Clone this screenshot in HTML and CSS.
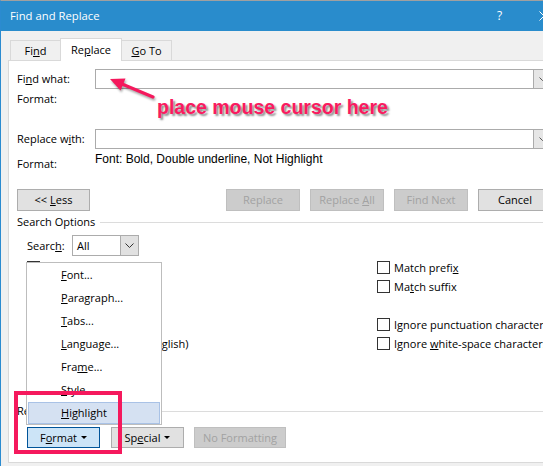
FILE: index.html
```html
<!DOCTYPE html>
<html lang="en">
<head>
<meta charset="utf-8">
<title>Find and Replace</title>
<link rel="stylesheet" href="styles.css">
</head>
<body>
<div class="window">
  <div class="titlebar">
    <span class="title">Find and Replace</span>
    <span class="tb-help">?</span>
    <svg class="tb-close" width="10" height="10" viewBox="0 0 10 10"><path d="M0.5 0.5 L9.5 9.5 M9.5 0.5 L0.5 9.5" stroke="#fff" stroke-width="1" fill="none"/></svg>
  </div>
  <div class="tabs">
    <div class="tab t-find">Fi<u>n</u>d</div>
    <div class="tab t-replace active">Re<u>p</u>lace</div>
    <div class="tab t-goto"><u>G</u>o To</div>
  </div>
  <div class="panel">
    <div class="frow r-find">
      <span class="lbl">Fi<u>n</u>d what:</span>
      <div class="combo"><div class="combo-field"></div><div class="combo-btn"><svg width="7" height="4" viewBox="0 0 7 4"><polyline points="0.5,0.5 3.5,3.5 6.5,0.5" fill="none" stroke="#555" stroke-width="1"/></svg></div></div>
    </div>
    <div class="frow r-fmt"><span class="lbl">Format:</span><span></span></div>
    <div class="frow r-replace">
      <span class="lbl">Replace w<u>i</u>th:</span>
      <div class="combo"><div class="combo-field"></div><div class="combo-btn"><svg width="7" height="4" viewBox="0 0 7 4"><polyline points="0.5,0.5 3.5,3.5 6.5,0.5" fill="none" stroke="#555" stroke-width="1"/></svg></div></div>
    </div>
    <div class="frow r-fmt2"><span class="lbl">Format:</span><span class="fmt-value">Font: Bold, Double underline, Not Highlight</span></div>
    <div class="btnrow">
      <button class="btn b-less"><span>&lt;&lt; <u>L</u>ess</span></button>
      <button class="btn dis b-replace"><span>Replace</span></button>
      <button class="btn dis b-gap"><span>Replace <u>A</u>ll</span></button>
      <button class="btn dis b-gap"><span>Find Next</span></button>
      <button class="btn b-gap"><span>Cancel</span></button>
    </div>
    <div class="group g-search"><span>Search Options</span><i class="rule"></i></div>
    <div class="searchrow">
      <span class="slbl">Searc<u>h</u>:</span>
      <div class="select"><span class="sel-val">All</span><span class="sel-btn"><svg width="9" height="5" viewBox="0 0 9 5"><polyline points="0.5,0.5 4.5,4.5 8.5,0.5" fill="none" stroke="#333" stroke-width="1"/></svg></span></div>
    </div>
    <div class="opts">
      <div class="opt"><span class="cb"></span><span>Matc<u>h</u> case</span></div>
      <div class="opt"><span class="cb"></span><span>Match prefi<u>x</u></span></div>
      <div class="opt"><span class="cb"></span><span>Find wh<u>o</u>le words only</span></div>
      <div class="opt"><span class="cb"></span><span>Ma<u>t</u>ch suffix</span></div>
      <div class="opt"><span class="cb"></span><span>Use wildcards</span></div>
      <div class="opt"></div>
      <div class="opt"><span class="cb"></span><span>Sounds li<u>k</u>e (English)</span></div>
      <div class="opt"><span class="cb"></span><span>Ignore punctuation characters</span></div>
      <div class="opt"><span class="cb"></span><span>Find all word forms (English)</span></div>
      <div class="opt"><span class="cb"></span><span>Ignore <u>w</u>hite-space characters</span></div>
    </div>
    <div class="group g-replace"><span>Replace</span><i class="rule"></i></div>
    <div class="btnrow2">
      <button class="btn focus b-format"><span>F<u>o</u>rmat</span><i class="caret"></i></button>
      <button class="btn b-special"><span>Sp<u>e</u>cial</span><i class="caret"></i></button>
      <button class="btn dis b-nofmt"><span>No Formatting</span></button>
    </div>
  </div>
</div>

<div class="menu">
  <div class="mi"><u>F</u>ont...</div>
  <div class="mi"><u>P</u>aragraph...</div>
  <div class="mi"><u>T</u>abs...</div>
  <div class="mi"><u>L</u>anguage...</div>
  <div class="mi">Fra<u>m</u>e...</div>
  <div class="mi"><u>S</u>tyle</div>
  <div class="mi hl"><u>H</u>ighlight</div>
</div>

<div class="callout">place mouse cursor here</div>
<svg class="arrow" width="70" height="40" viewBox="0 0 70 40">
  <line x1="22" y1="14" x2="53" y2="27" stroke="#f5195d" stroke-width="3.2" stroke-linecap="round"/>
  <polygon points="10,9 25.5,8.5 20.5,20.5" fill="#f5195d"/>
</svg>
<div class="mark"></div>
</body>
</html>
```

FILE: styles.css
```css
* { box-sizing: border-box; }
html, body { margin: 0; padding: 0; }
body {
  width: 543px;
  height: 466px;
  overflow: hidden;
  position: relative;
  background: #f0f0f0;
  color: #000;
  font-family: "Open Sans", "Noto Sans", "DejaVu Sans", sans-serif;
  font-size: 11px;
  line-height: 16px;
}
u { text-decoration: underline; text-decoration-thickness: 1px; text-underline-offset: 1px; }

.window {
  width: 570px;
  height: 466px;
  border-top: 1px solid #a0a0a0;
  border-left: 1px solid #2b8bd0;
}

/* title bar */
.titlebar {
  height: 30px;
  background: #298ccc;
  color: #fff;
  display: flex;
  align-items: center;
  padding-left: 9px;
}
.title { width: 487px; font-size: 11.3px; }
.tb-help { width: 42px; font-size: 12px; }
.tb-close { display: block; }

/* tabs */
.tabs {
  height: 30px;
  display: flex;
  align-items: flex-end;
  padding-left: 9px;
  margin-bottom: -1px;
  position: relative;
  z-index: 1;
}
.tab {
  height: 20px;
  margin-bottom: 1px;
  border: 1px solid #d9d9d9;
  border-bottom: none;
  background: #f0f0f0;
  text-align: center;
  line-height: 19px;
}
.t-find { width: 51px; }
.t-replace { width: 62px; margin-left: -1px; }
.t-goto { width: 51px; margin-left: -1px; }
.tab.active {
  height: 23px;
  margin-bottom: 0;
  background: #fff;
  line-height: 21px;
}

/* panel */
.panel {
  margin-left: 7px;
  height: 403px;
  background: #fff;
  border: 1px solid #d9d9d9;
  border-right: none;
  padding: 8px 0 0 8px;
}
.frow {
  display: grid;
  grid-template-columns: 78px 456px;
  align-items: center;
}
.r-find { height: 20px; }
.r-fmt { margin-top: 2px; height: 16px; }
.r-replace { margin-top: 22px; height: 20px; }
.r-fmt2 { margin-top: 2px; height: 21px; }
.r-fmt2 .lbl { align-self: end; }
.fmt-value {
  align-self: start;
  font-family: "Liberation Sans", Arial, sans-serif;
  font-size: 12px;
}

.combo {
  height: 20px;
  display: flex;
}
.combo-field {
  flex: 1;
  border: 1px solid #ababab;
  border-right: none;
  background: #fff;
}
.combo-btn {
  width: 18px;
  border: 1px solid #ababab;
  background: #e6e6e6;
  display: flex;
  align-items: center;
  justify-content: center;
}
.combo-btn svg { display: block; }

/* buttons */
.btn {
  height: 22px;
  width: 74px;
  padding: 0;
  border: 1px solid #adadad;
  background: #e1e1e1;
  color: #000;
  font: inherit;
  line-height: 16px;
  display: flex;
  align-items: center;
  justify-content: center;
  white-space: nowrap;
}
.btn.dis {
  background: #cccccc;
  border-color: #bfbfbf;
  color: #a2a2a2;
}
.btnrow { margin-top: 17px; display: flex; height: 22px; }
.b-less { width: 73px; }
.b-replace { margin-left: 136px; }
.b-gap { margin-left: 10px; }

/* groups */
.group {
  display: flex;
  align-items: center;
  height: 16px;
}
.rule {
  flex: 1;
  height: 1px;
  background: #dcdcdc;
  margin-left: 5px;
}
.g-search { margin-top: 3px; }
.g-replace { margin-top: 50px; }

/* search */
.searchrow {
  margin-top: 5px;
  padding-left: 10px;
  display: flex;
  align-items: center;
  height: 21px;
}
.slbl { width: 45px; }
.select {
  width: 67px;
  height: 21px;
  border: 1px solid #acacac;
  display: flex;
}
.sel-val { flex: 1; padding-left: 4px; line-height: 19px; }
.sel-btn {
  width: 18px;
  border-left: 1px solid #acacac;
  background: #e1e1e1;
  display: flex;
  align-items: center;
  justify-content: center;
}
.sel-btn svg { display: block; }

/* options */
.opts {
  margin-top: 2px;
  padding-left: 10px;
  display: grid;
  grid-template-columns: 350px 220px;
  grid-auto-rows: 19px;
}
.opt {
  display: flex;
  align-items: center;
  gap: 4px;
  white-space: nowrap;
}
.cb {
  width: 13px;
  height: 13px;
  border: 1px solid #333;
  background: #fff;
  flex: none;
}

/* bottom buttons */
.btnrow2 {
  margin-top: 8px;
  padding-left: 10px;
  display: flex;
  height: 21px;
}
.btnrow2 .btn { height: 21px; }
.b-format { width: 73px; }
.b-special { width: 73px; margin-left: 11px; }
.b-nofmt { width: 92px; margin-left: 10px; }
.btn.focus { background: #cce4f7; border-color: #005499; }
.caret {
  display: inline-block;
  width: 0;
  height: 0;
  border-left: 3px solid transparent;
  border-right: 3px solid transparent;
  border-top: 3px solid #000;
  margin-left: 4px;
}

/* overlays */
.menu {
  position: absolute;
  left: 26px;
  top: 262px;
  width: 136px;
  height: 163px;
  background: #fff;
  border: 1px solid #bdbdbd;
}
.mi {
  height: 23px;
  line-height: 23px;
  padding-left: 34px;
}
.mi.hl {
  margin: 1px 1px 0 1px;
  height: 22px;
  line-height: 20px;
  padding-left: 32px;
  background: #d5e1f2;
  border: 1px solid #a9c2e6;
}

.callout {
  position: absolute;
  left: 157px;
  top: 98px;
  font-family: "Liberation Sans", Arial, sans-serif;
  font-weight: bold;
  font-size: 19.5px;
  line-height: 19.5px;
  color: #fa1a5f;
  white-space: nowrap;
  text-shadow: 2px 2px 2px rgba(0, 0, 0, 0.45);
}
.arrow {
  position: absolute;
  left: 100px;
  top: 70px;
  filter: drop-shadow(1px 2px 1px rgba(0, 0, 0, 0.35));
}
.mark {
  position: absolute;
  left: 14px;
  top: 391px;
  width: 108px;
  height: 63px;
  border: 4px solid #f5195d;
}
```
